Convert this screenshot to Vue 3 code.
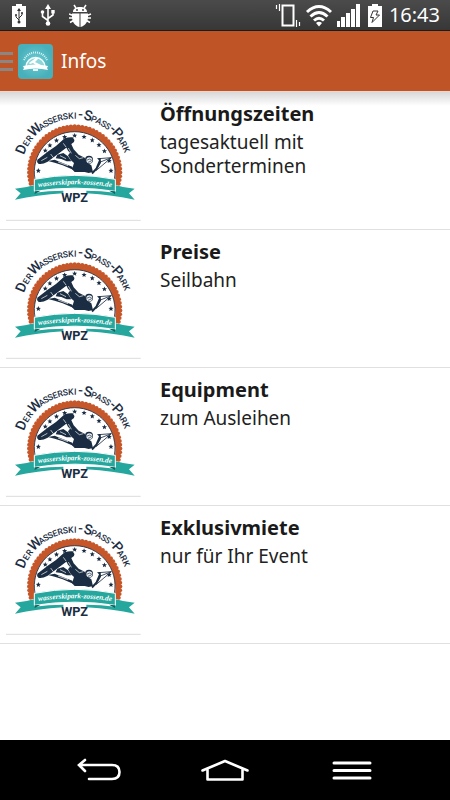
<script setup>
const rows = [
  { title: 'Öffnungszeiten', text: 'tagesaktuell mit Sonderterminen' },
  { title: 'Preise', text: 'Seilbahn' },
  { title: 'Equipment', text: 'zum Ausleihen' },
  { title: 'Exklusivmiete', text: 'nur für Ihr Event' }
]

// Arc lettering: character, angle from vertical, capital or small capital
const letters = [
  ['D', -67, 1], ['E', -59.5, 0], ['R', -53.5, 0],
  ['W', -43.5, 1], ['A', -36, 0], ['S', -30.5, 0], ['S', -25.5, 0], ['E', -20.5, 0], ['R', -15, 0], ['S', -9.5, 0], ['K', -4, 0], ['I', 0.5, 0],
  ['-', 6, 1], ['S', 13.5, 1], ['P', 20, 0], ['A', 25.5, 0], ['S', 31, 0], ['S', 36, 0],
  ['-', 41.5, 1], ['P', 48, 1], ['A', 54.5, 0], ['R', 60.5, 0], ['K', 66.5, 0]
]

const cx = 224
const cy = 240
const stars = [-88, -54, -43, -30, -16, 0, 15, 29, 42, 55, 72, 88].map((deg) => {
  const a = (deg * Math.PI) / 180
  return [cx + 109 * Math.sin(a), cy - 109 * Math.cos(a)]
})
const starPath = Array.from({ length: 10 }, (_, i) => {
  const r = i % 2 ? 3.6 : 8
  const a = (i * Math.PI) / 5
  return `${(r * Math.sin(a)).toFixed(1)},${(-r * Math.cos(a)).toFixed(1)}`
}).join(' ')
const teeth = Array.from({ length: 45 }, (_, i) => {
  const a = ((-105 + (i * 210) / 44) * Math.PI) / 180
  return [cx + 137 * Math.sin(a), cy - 137 * Math.cos(a)]
})
</script>

<template>
  <div class="screen">
    <header class="status">
      <div class="group left">
        <svg width="16" height="24" viewBox="0 0 16 24">
          <path d="M5 1h6v2h4v21H1V3h4z" fill="#fff" />
          <path d="M8 6v14M8 17l-3-3v-2M8 15l3-3v-2" fill="none" stroke="#333" stroke-width="1" />
          <path d="M8 5l2 3H6z" fill="#333" /><circle cx="8" cy="19" r="1.500" fill="#333" /><circle cx="5" cy="12" r="1" fill="#333" /><circle cx="11" cy="10" r="1" fill="#333" />
        </svg>
        <svg width="16" height="24" viewBox="0 0 16 24">
          <path d="M8 3v18M8 17.500L2.500 13.500V9M8 15.500l5-3.500V9" fill="none" stroke="#fff" stroke-width="1.600" />
          <path d="M8 1l3 5H5z" fill="#fff" /><circle cx="8" cy="20.500" r="2.300" fill="#fff" /><circle cx="2.500" cy="9" r="1.800" fill="#fff" /><path d="M11.300 7h3.400v3.400h-3.400z" fill="#fff" />
        </svg>
        <svg width="24" height="24" viewBox="0 0 24 24">
          <path d="M4 9C4 5.500 7 4 11 4S18 5.500 18 9zM3 10.500h7.500V24C5.500 23 3 18 3 14zM11.500 10.500H19V14c0 4-2.500 9-7.500 10z" fill="#fff" />
          <path d="M7 5L5 2M15 5l2-3M4 12.500L0 11M4 15H0M4.500 17.500L1 19.500M18 12.500l4-1.500M18 15h4M17.500 17.500l3.500 2" stroke="#fff" stroke-width="1.500" />
          <circle cx="8" cy="7" r=".9" fill="#333" /><circle cx="14" cy="7" r=".9" fill="#333" />
        </svg>
      </div>
      <div class="group">
        <svg width="26" height="26" viewBox="0 0 26 26">
          <path d="M7.500 3.500h11v20h-11z" fill="none" stroke="#fff" stroke-width="2" />
          <path d="M4.500 2v7M1.500 3v4M21.500 18v7M24.500 20v4" stroke="#fff" stroke-width="1.200" />
        </svg>
        <svg width="28" height="24" viewBox="0 0 28 24">
          <path d="M2 9Q14-2 26 9M5.500 13.500Q14 5.500 22.500 13.500M9 17.500Q14 13 19 17.500" fill="none" stroke="#fff" stroke-width="3" />
          <path d="M11 20q3-2.500 6 0l-3 3.500z" fill="#fff" />
        </svg>
        <svg width="26" height="24" viewBox="0 0 26 24">
          <path d="M-1 18h4v6h-4zM4 14h4v10H4zM9 10h4v14H9zM14 6h4v18h-4zM19 1h4v23h-4z" fill="#fff" />
        </svg>
        <svg width="16" height="24" viewBox="0 0 16 24">
          <path d="M5 1h6v2h4v21H1V3h4z" fill="#fff" />
          <path d="M6 8h5l-2 4h3.500L5 19.500l1.500-5H3.500z" fill="none" stroke="#333" stroke-width="1" />
        </svg>
        <time>16:43</time>
      </div>
    </header>

    <div class="appbar">
      <button class="menu" aria-label="Menü">
        <svg width="13" height="20" viewBox="0 0 13 20"><path d="M0 2.500h13M0 10.500h13M0 18.500h13" stroke="#8b8583" stroke-width="3" /></svg>
      </button>
      <svg class="appicon" width="35" height="35" viewBox="0 0 35 35">
        <defs>
          <radialGradient id="tile"><stop offset="0" stop-color="#6ccbd3" /><stop offset="1" stop-color="#48b0ba" /></radialGradient>
        </defs>
        <rect width="35" height="35" rx="4" fill="url(#tile)" />
        <path d="M8 23A9.500 9.500 0 0 1 27 23z" fill="#8fd6da" stroke="#f4fcfc" stroke-width="1.500" />
        <path d="M6 16A12.500 12.500 0 0 1 29 16" fill="none" stroke="#dff4f5" stroke-width="2" stroke-dasharray="1 1" />
        <path d="M11 19l8-6 1 2-3 3 6 3h-5l-3-2-3 1z" fill="#fff" />
        <path d="M5 22q12-3 25 0l-1 2 1 2q-12-3-25 0l1-2z" fill="#fff" />
        <path d="M15 26h5" stroke="#e4f7f7" stroke-width="2" />
      </svg>
      <h1>Infos</h1>
    </div>

    <main>
      <ul>
        <li v-for="(row, n) in rows" :key="row.title">
          <a href="#">
            <svg class="logo" viewBox="0 0 450 411">
              <g fill="#c5572a">
                <circle v-for="(t, i) in teeth" :key="i" :cx="t[0]" :cy="t[1]" r="6" />
                <path d="M92 279A138 138 0 1 1 356 279L342 279A122 122 0 1 0 106 279Z" />
              </g>
              <path d="M105 262A121 121 0 1 1 343 262" fill="#fff" stroke="#1b2d42" stroke-width="2.500" />
              <g fill="#1b2d42">
                <polygon v-for="(s, i) in stars" :key="i" :points="starPath" :transform="`translate(${s[0]} ${s[1]})`" />
                <path d="M112 203L145 178L168 162L194 139Q209 134 218 136Q225 143 222 150L190 174L169 190L143 209Q126 218 115 215Q109 210 112 203Z" />
                <path d="M198 164L212 152L221 172L236 188L254 197L260 211L274 220L279 240L266 243L254 240H224L216 232L222 213L212 204L204 190L210 182L204 176Z" />
                <path d="M172 188L190 183L204 193L214 208L200 208L184 201L167 199Z" />
                <path d="M144 207L164 203L188 213L217 224L221 234L188 220L164 212Z" />
                <circle cx="267" cy="203" r="12" />
                <path d="M274 242L287 228L297 205L291 199L302 198L303 212L292 232L278 247Z" />
              </g>
              <circle cx="268" cy="205" r="9" fill="#e9edf0" />
              <path d="M260 205Q268 197 277 206M264 211L274 207" fill="none" stroke="#1b2d42" stroke-width="2" />
              <path d="M124 206L142 196M152 186L160 197M190 154L198 165M205 168L214 184M226 190L238 200L250 197M174 210L204 221M180 191L198 200" fill="none" stroke="#fff" stroke-width="2" />
              <path d="M296 200L334 197M301 210L334 197L288 236" fill="none" stroke="#1b2d42" stroke-width="2.500" />
              <path d="M45 290Q75 288 104 279V302Q145 296 190 296V304Q110 309 45 323L62 304Z" fill="#25a79e" />
              <path d="M404 290Q374 288 345 279V302Q304 296 259 296V304Q339 309 404 323L387 304Z" fill="#25a79e" />
              <path d="M103 262Q224 238 346 262V298Q224 279 103 298Z" fill="#25a79e" stroke="#fff" stroke-width="3" />
              <path d="M104 298V306L122 296ZM345 298V306L327 296Z" fill="#12635f" />
              <path :id="`line-${n}`" d="M104 287Q224 267 346 287" fill="none" />
              <text class="banner"><textPath :href="`#line-${n}`" startOffset="50%" text-anchor="middle">wasserskipark-zossen.de</textPath></text>
              <text
                v-for="(l, i) in letters"
                :key="i"
                class="arc"
                :class="{ cap: l[2] }"
                x="224"
                y="80"
                :transform="`rotate(${l[1]} 224 240)`"
              >{{ l[0] }}</text>
              <text class="wpz" x="224" y="331">WPZ</text>
              <path d="M18 385H422" stroke="#dcdcdc" stroke-width="3" />
            </svg>
            <span class="copy">
              <strong>{{ row.title }}</strong>
              <span class="sub">{{ row.text }}</span>
            </span>
          </a>
        </li>
      </ul>
    </main>

    <nav>
      <button aria-label="Zurück">
        <svg width="48" height="28" viewBox="0 0 48 28">
          <path d="M6 9H38Q45.500 9 45.500 16T38 23H15M11 4L5 9l6 6" fill="none" stroke="#fff" stroke-width="2.600" stroke-linecap="round" />
        </svg>
      </button>
      <button aria-label="Startseite">
        <svg width="50" height="28" viewBox="0 0 50 28">
          <path d="M2.500 14.500L25 5 47.500 14.500M7.500 13V23.500h35V13" fill="none" stroke="#fff" stroke-width="2.600" stroke-linecap="round" stroke-linejoin="round" />
        </svg>
      </button>
      <button aria-label="Optionen">
        <svg width="42" height="28" viewBox="0 0 42 28">
          <path d="M3 7H39M3 14.500H39M3 22H39" stroke="#fff" stroke-width="3" stroke-linecap="round" />
        </svg>
      </button>
    </nav>
  </div>
</template>

<style>
body { margin: 0; background: #fff; }
</style>

<style scoped>
.screen {
  min-height: 100vh;
  display: flex;
  flex-direction: column;
  font-family: "Noto Sans", "Open Sans", sans-serif;
  color: #1a1a1a;
}
svg { display: block; }
.status {
  box-sizing: border-box;
  height: 31px;
  padding: 0 10px 0 11px;
  display: flex;
  align-items: center;
  justify-content: space-between;
  background: linear-gradient(#4b4b4b, #373737);
  border-bottom: 1px solid #1c1c1c;
  color: #fff;
}
.group { display: flex; align-items: center; gap: 4px; }
.left { gap: 13px; }
time { font-size: 20px; line-height: 28px; margin-left: 2px; }
.appbar {
  height: 60px;
  display: flex;
  align-items: center;
  background: #bf5426;
  border-bottom: 1px solid #f0d5c8;
  color: #fff;
}
button { border: 0; padding: 0; background: none; }
.appicon { margin: 0 8px 0 5px; }
h1 { margin: 0; font-size: 19px; font-weight: 400; }
main { flex: 1; background: linear-gradient(#d8d8d8, #fff 14px); }
ul { list-style: none; margin: 0; padding: 0; }
li { border-bottom: 1px solid #e0e0e0; }
a { display: flex; color: inherit; text-decoration: none; }
.logo { flex: none; width: 150px; height: 137px; }
.copy { flex: 0 1 190px; padding: 8px 0 0 10px; display: flex; flex-direction: column; gap: 2px; }
strong { font-size: 20px; line-height: 28px; font-weight: 700; }
.sub { font-size: 19px; line-height: 24px; color: #222; }
.banner { font: italic 700 22px "Liberation Serif", serif; fill: #fff; }
.arc {
  font: 500 26px Roboto, sans-serif;
  text-anchor: middle;
  fill: #1b2d42;
}
.arc.cap { font-size: 42px; }
.wpz {
  font: 700 38px Roboto, sans-serif;
  text-anchor: middle;
  fill: #1b2d42;
}
nav {
  height: 60px;
  padding: 0 35px;
  display: grid;
  grid-template-columns: repeat(3, 1fr);
  align-items: center;
  justify-items: center;
  background: #000;
}
</style>
